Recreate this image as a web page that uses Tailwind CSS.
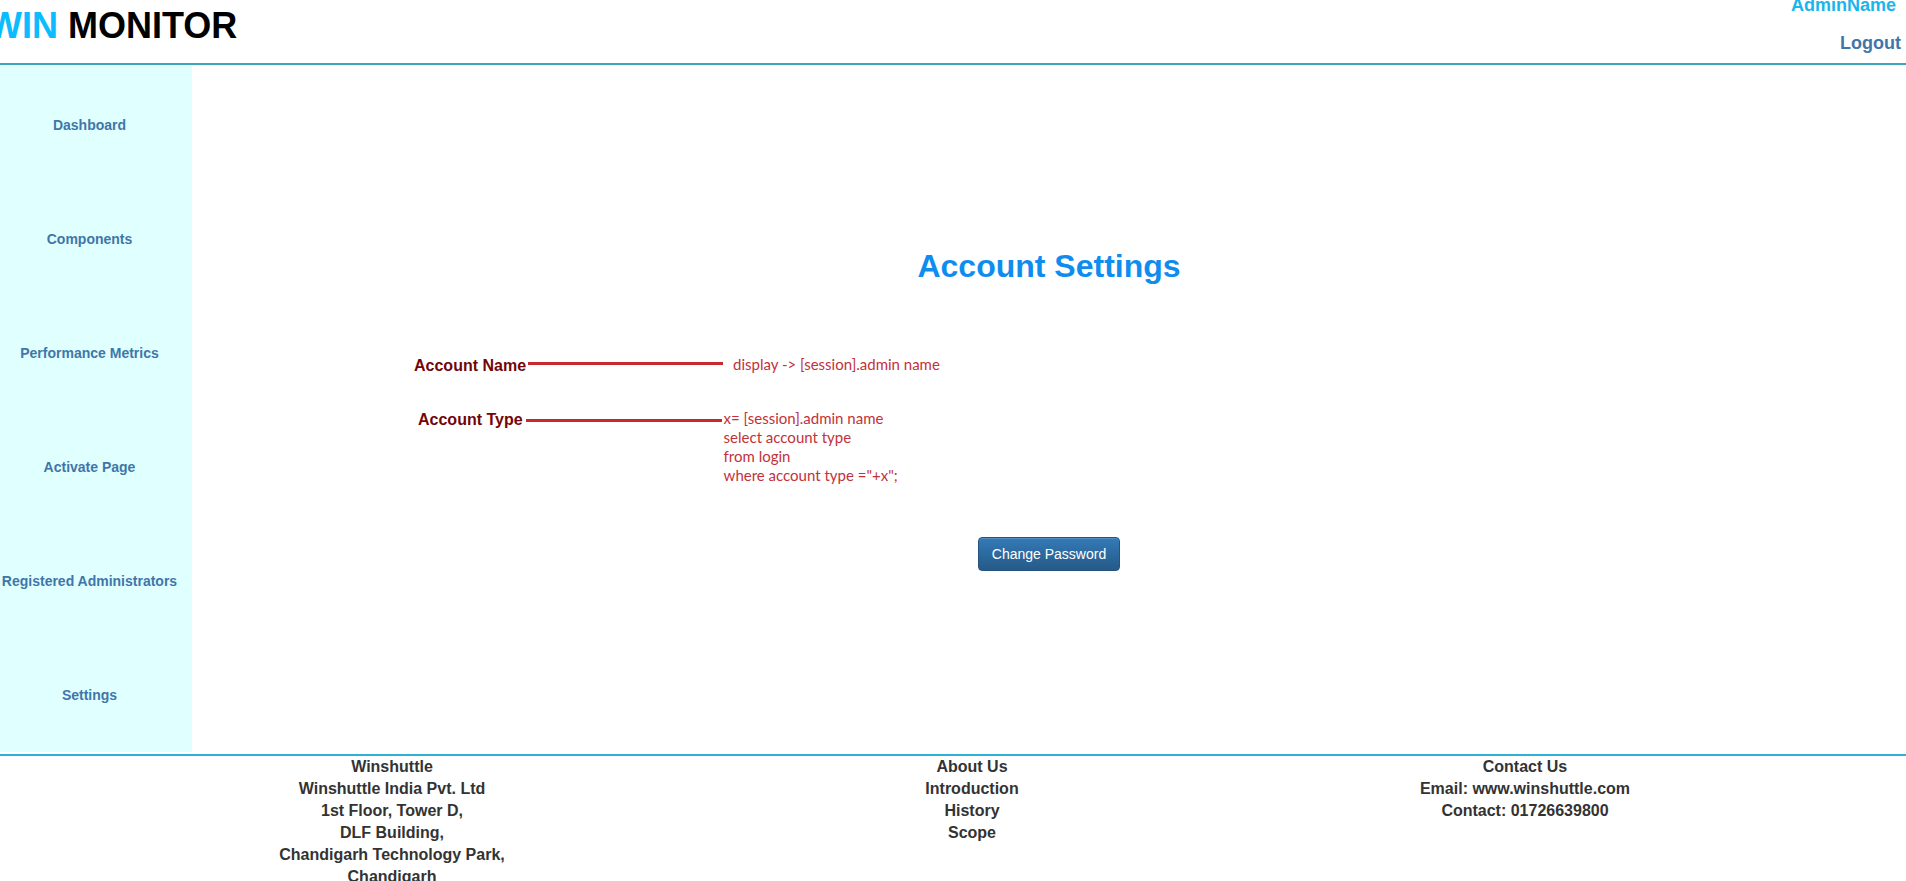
<!DOCTYPE html>
<html lang="en">
<head>
<meta charset="utf-8">
<title>Win Monitor - Account Settings</title>
<script src="https://cdn.jsdelivr.net/npm/@tailwindcss/browser@4"></script>
</head>
<body class="h-screen overflow-hidden bg-white font-['Liberation_Sans',Arial,sans-serif] text-[#333333]">
<header class="flex h-[65px] items-start justify-between border-b-2 border-[#3ea6ba]">
  <h1 class="-ml-3 pt-1.5 text-4xl leading-10 font-bold whitespace-nowrap text-black"><span class="text-[#0cbcff]">WIN</span> MONITOR</h1>
  <div class="-mt-3.5 flex flex-col items-end pr-[5px] text-lg leading-[38px] font-bold">
    <span class="pr-[5px] text-[#1cb5ea]">AdminName</span>
    <a href="#" class="text-[#3f76a9]">Logout</a>
  </div>
</header>
<div class="flex pt-px pb-0.5">
  <nav class="w-48 shrink-0 bg-[#e0ffff] pt-0.5 pr-[13px] text-sm leading-5 font-bold whitespace-nowrap text-[#3f76a9]">
    <ul>
      <li class="flex h-[114px] items-center justify-center"><a href="#">Dashboard</a></li>
      <li class="flex h-[114px] items-center justify-center"><a href="#">Components</a></li>
      <li class="flex h-[114px] items-center justify-center"><a href="#">Performance Metrics</a></li>
      <li class="flex h-[114px] items-center justify-center"><a href="#">Activate Page</a></li>
      <li class="flex h-[114px] items-center justify-center"><a href="#">Registered Administrators</a></li>
      <li class="flex h-[114px] items-center justify-center"><a href="#">Settings</a></li>
    </ul>
  </nav>
  <main class="grow pt-[180px]">
    <h2 class="text-center text-[32px] leading-10 font-bold text-[#0f8def]">Account Settings</h2>
    <dl class="pt-[69px] text-base leading-[22px]">
      <div class="flex items-start gap-0.5 pl-[222px]">
        <dt class="font-bold text-[#730508]">Account Name</dt>
        <dd class="flex items-start gap-2.5 text-[#c2323a]">
          <span class="mt-[7px] h-[3px] w-[195px] bg-[#c9282d]"></span>
          <span class="font-[Lato,sans-serif] text-[15px] leading-[19px]">display -&gt; [session].admin name</span>
        </dd>
      </div>
      <div class="flex items-start gap-[3px] pt-8 pl-[226px]">
        <dt class="font-bold text-[#730508]">Account Type</dt>
        <dd class="flex items-start gap-0.5 text-[#c2323a]">
          <span class="mt-2.5 h-[3px] w-[196px] bg-[#c9282d]"></span>
          <span class="font-[Lato,sans-serif] text-[15px] leading-[19px]">x= [session].admin name<br>select account type<br>from login<br>where account type ="+x";</span>
        </dd>
      </div>
    </dl>
    <div class="flex justify-center pt-[52px]">
      <button type="button" class="rounded border border-[#245580] bg-linear-to-b from-[#337ab7] to-[#265a88] px-[13px] py-1.5 text-sm leading-5 text-white inset-shadow-[0_1px_0_rgba(255,255,255,0.15)]">Change Password</button>
    </div>
  </main>
</div>
<footer class="grid grid-cols-[784fr_376fr_730fr_16fr] border-t-2 border-[#2fb0d6] text-center text-base leading-[22px] font-bold">
  <address class="not-italic">Winshuttle<br>Winshuttle India Pvt. Ltd<br>1st Floor, Tower D,<br>DLF Building,<br>Chandigarh Technology Park,<br>Chandigarh</address>
  <div>About Us<br>Introduction<br>History<br>Scope</div>
  <div>Contact Us<br>Email: www.winshuttle.com<br>Contact: 01726639800</div>
</footer>
</body>
</html>
